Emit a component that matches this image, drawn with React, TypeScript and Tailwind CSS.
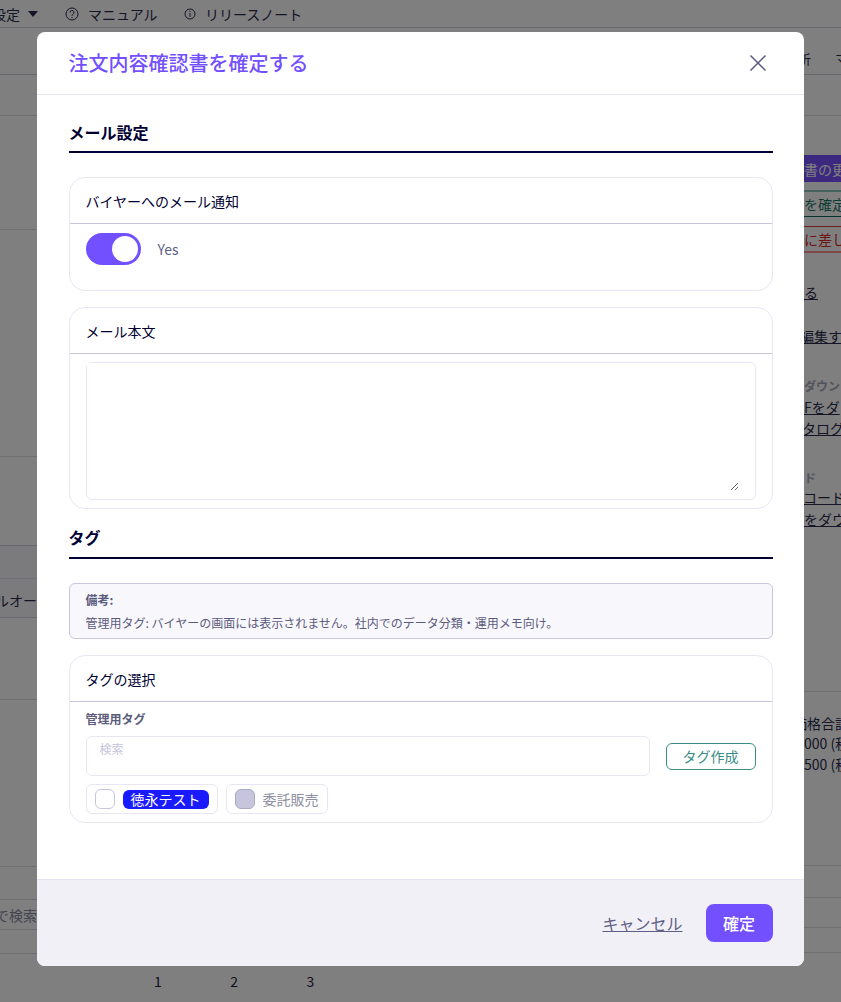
function CloseIcon() {
  return (
    <svg width="18" height="18" viewBox="0 0 18 18" fill="none" stroke="#5a5a80" strokeWidth="1.5">
      <path d="M1.5 1.5 16.5 16.5M16.5 1.5 1.5 16.5" />
    </svg>
  );
}

function SectionTitle({ children, className = '' }: { children: string; className?: string }) {
  return <h2 className={`border-b-2 border-[#000033] text-base font-bold text-[#000033] ${className}`}>{children}</h2>;
}

function Card({ title, children, className = '' }: { title: string; children: React.ReactNode; className?: string }) {
  return (
    <section className={`rounded-2xl border border-[#e8e6f5] bg-white ${className}`}>
      <div className="flex h-[46px] items-center border-b border-[#c9c6dc] px-4 text-sm text-[#000033]">{title}</div>
      {children}
    </section>
  );
}

function PageBehind() {
  return (
    <div className="flex h-full flex-col text-sm whitespace-nowrap text-[#2b2b4d]">
      <div className="flex h-[28px] shrink-0 items-center border-b border-[#cfcfdc]">
        <span className="-ml-[8px] flex w-[73px] items-center gap-2">
          設定
          <svg width="10" height="6" viewBox="0 0 10 6" fill="#2b2b4d"><path d="M0 0h10L5 6z" /></svg>
        </span>
        <svg width="14" height="14" viewBox="0 0 14 14" fill="none" stroke="#2b2b4d"><circle cx="7" cy="7" r="6" /><path d="M5 5.5a2 2 0 1 1 3 1.7c-.7.4-1 .7-1 1.6M7 10v1" /></svg>
        <span className="ml-[9px] w-[96px]">マニュアル</span>
        <svg width="12" height="12" viewBox="0 0 12 12" fill="none" stroke="#2b2b4d"><circle cx="6" cy="6" r="5" /><path d="M6 5v4M6 3v1" /></svg>
        <span className="ml-[9px]">リリースノート</span>
      </div>
      <div className="flex h-[47px] shrink-0 items-center overflow-hidden border-b border-[#cfcfdc] pt-[17px] text-[13px]">
        <span className="ml-[798px] w-[37px] shrink-0">析</span>
        <span className="shrink-0">マ</span>
      </div>
      <div className="h-[41px] shrink-0 border-b border-[#dcdce6]" />
      <div className="grid min-h-0 flex-1 grid-cols-[804px_37px]">
        <div className="flex flex-col">
          <div className="h-[114px] border-b border-[#dcdce6]" />
          <div className="h-[227px] border-b border-[#dcdce6]" />
          <div className="h-[89px] border-b border-[#d0d0dc]" />
          <div className="h-[33px] border-b border-[#e4e4ec] bg-[#f6f6fa]" />
          <div className="flex h-[39px] items-center justify-end border-b border-[#d0d0dc] bg-[#f6f6fa] pt-1 pr-[767px]">ルオー</div>
          <div className="h-[82px] border-b border-[#dcdce6]" />
          <div className="h-[167px] border-b border-[#dcdce6]" />
          <div className="h-[33px] border-b border-[#dcdce6]" />
          <div className="flex h-[30px] items-center justify-end border-b border-[#dcdce6] pr-[767px] text-[#8a8a9e]">で検索</div>
          <div className="h-[24px] border-b border-[#dcdce6]" />
          <div className="flex flex-1 items-center gap-[68.5px] pt-[6px] pl-[154px] text-[#1f1f3d]">
            <span>1</span>
            <span>2</span>
            <span>3</span>
          </div>
        </div>
        <div className="flex flex-col overflow-hidden">
          <div className="mt-[39px] flex h-[27px] shrink-0 items-center bg-[#7950ff] text-white">書の更新</div>
          <div className="mt-[8px] flex h-[27px] shrink-0 items-center border-t-2 border-b border-t-[#8fc7bd] border-b-[#0f6a5a] text-[#1f7a6c]">を確定</div>
          <div className="mt-[9px] flex h-[27px] shrink-0 items-center border-t border-b-2 border-t-[#e23b3b] border-b-[#ff8f8f] text-[#d92c2c]">に差し</div>
          <span className="mt-[29px] underline">る</span>
          <span className="mt-[24px] -ml-[4px] underline">編集す</span>
          <span className="mt-[32px] text-xs font-bold text-[#a7a7bc]">ダウン</span>
          <span className="mt-[3px] underline">Fをダ</span>
          <span className="mt-[1px] -ml-[2px] underline">タログ</span>
          <span className="mt-[32px] text-xs font-bold text-[#a7a7bc]">ド</span>
          <span className="mt-[1px] -ml-[1px] underline">コード</span>
          <span className="mt-[2px] underline">をダウ</span>
          <div className="mt-[162px] h-px shrink-0 bg-[#dcdce6]" />
          <span className="mt-[21px] -ml-[11px]">価格合計</span>
          <span className="mt-0">000 (税</span>
          <span className="mt-[1px]">500 (税</span>
          <div className="mt-[91px] h-px shrink-0 bg-[#dcdce6]" />
          <div className="mt-[31px] h-px shrink-0 bg-[#dcdce6]" />
          <div className="mt-[29px] h-px shrink-0 bg-[#dcdce6]" />
          <div className="mt-[24px] h-px shrink-0 bg-[#dcdce6]" />
        </div>
      </div>
    </div>
  );
}

export default function App() {
  return (
    <div className="relative h-[1002px] w-[841px] overflow-hidden bg-white font-['Noto_Sans_CJK_JP',sans-serif]">
      <PageBehind />

      <div className="absolute inset-0 flex justify-center bg-black/50 pt-[32px]">
        <div className="flex h-[934px] w-[767.5px] shrink-0 flex-col overflow-hidden rounded-lg bg-white">
          <header className="flex h-[63px] shrink-0 items-center justify-between border-b border-[#e6e3f5] pr-[37px] pl-[31.75px]">
            <h1 className="text-xl font-medium text-[#7350ff]">注文内容確認書を確定する</h1>
            <CloseIcon />
          </header>

          <div className="flex-1 px-[31.75px]">
            <SectionTitle className="mt-[25px] pb-[7px]">メール設定</SectionTitle>

            <Card title="バイヤーへのメール通知" className="mt-6 h-[114px]">
              <div className="flex items-center px-4 pt-[9px]">
                <span className="flex h-8 w-[55px] items-center justify-end rounded-full bg-[#7350ff] pr-[3px]">
                  <span className="h-[26px] w-[26px] rounded-full bg-white" />
                </span>
                <span className="ml-[17px] text-sm text-[#5f5f86]">Yes</span>
              </div>
            </Card>

            <Card title="メール本文" className="mt-4 h-[202px]">
              <div className="px-4 pt-2">
                <div className="flex h-[138px] rounded-md border border-[#e8e6f5] bg-white pr-4 pb-2">
                  <textarea className="block flex-1 bg-white outline-none" />
                </div>
              </div>
            </Card>

            <SectionTitle className="mt-4 pb-[8px]">タグ</SectionTitle>

            <div className="mt-6 h-[56px] rounded-md border border-[#c8c6e0] bg-[#f8f7fc] px-4 pt-[6px] text-[#5b5b7c]">
              <p className="text-xs leading-[20px] font-bold">備考:</p>
              <p className="mt-[3px] text-xs leading-[20px]">管理用タグ: バイヤーの画面には表示されません。社内でのデータ分類・運用メモ向け。</p>
            </div>

            <Card title="タグの選択" className="mt-4 h-[168px]">
              <div className="px-4 pt-[7px]">
                <p className="text-xs leading-[20px] font-bold text-[#5b5b7c]">管理用タグ</p>
                <div className="mt-[7px] flex items-center gap-4">
                  <input
                    placeholder="検索"
                    className="h-[40px] flex-1 rounded-md border border-[#e8e6f5] px-[13px] pb-[15px] text-xs placeholder:text-[#c5c5db]"
                  />
                  <button className="h-[27px] w-[90px] rounded-md border border-[#3a8d86] text-sm text-[#3a8d86]">タグ作成</button>
                </div>
                <div className="mt-2 flex gap-2">
                  <label className="flex h-[30px] items-center gap-2 rounded-md border border-[#e8e6f5] px-2">
                    <span className="h-5 w-5 rounded-md border border-[#c5c6de] bg-white" />
                    <span className="rounded-md bg-[#1a1aff] px-2 text-sm leading-[19px] text-white">徳永テスト</span>
                  </label>
                  <label className="flex h-[30px] items-center gap-2 rounded-md border border-[#e8e6f5] px-2">
                    <span className="h-5 w-5 rounded-md border border-[#a9a9c2] bg-[#c5c6de]" />
                    <span className="text-sm text-[#8f8fa3]">委託販売</span>
                  </label>
                </div>
              </div>
            </Card>
          </div>

          <footer className="flex h-[87px] shrink-0 items-center justify-end gap-[23px] border-t border-[#e6e3f5] bg-[#f1f0f6] px-[31.75px]">
            <a className="text-base text-[#5f5f86] underline">キャンセル</a>
            <button className="h-[38px] w-[67px] rounded-lg bg-[#7350ff] text-base font-medium text-white">確定</button>
          </footer>
        </div>
      </div>
    </div>
  );
}
